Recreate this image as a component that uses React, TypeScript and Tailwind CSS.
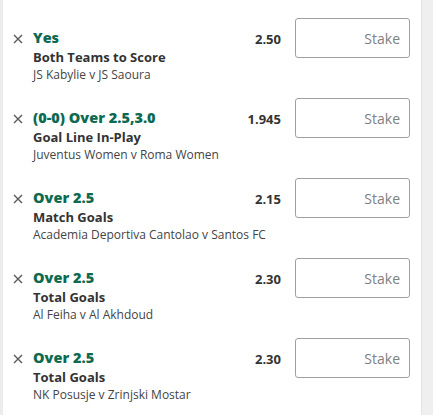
import React from "react";

type Bet = {
  selection: string;
  market: string;
  event: string;
  odds: string;
};

const bets: Bet[] = [
  { selection: "Yes", market: "Both Teams to Score", event: "JS Kabylie v JS Saoura", odds: "2.50" },
  { selection: "(0-0) Over 2.5,3.0", market: "Goal Line In-Play", event: "Juventus Women v Roma Women", odds: "1.945" },
  { selection: "Over 2.5", market: "Match Goals", event: "Academia Deportiva Cantolao v Santos FC", odds: "2.15" },
  { selection: "Over 2.5", market: "Total Goals", event: "Al Feiha v Al Akhdoud", odds: "2.30" },
  { selection: "Over 2.5", market: "Total Goals", event: "NK Posusje v Zrinjski Mostar", odds: "2.30" },
];

const CloseIcon = () => (
  <svg width="10" height="10" viewBox="0 0 10 10" className="block">
    <path d="M1 1 L9 9 M9 1 L1 9" stroke="#5a5a5a" strokeWidth="1.4" />
  </svg>
);

const BetRow: React.FC<{ bet: Bet }> = ({ bet }) => (
  <div className="flex items-start h-[80px] pt-[18px]">
    <div className="w-[30px] shrink-0 pl-[10px] pt-[16px]">
      <CloseIcon />
    </div>
    <div className="flex-1 min-w-0 pt-[10px]">
      <div className="text-[14.5px] leading-[20px] font-extrabold text-[#0d6a50] whitespace-nowrap">{bet.selection}</div>
      <div className="text-[13px] leading-[18px] font-bold text-[#333]">{bet.market}</div>
      <div className="text-[12px] leading-[17px] text-[#444] whitespace-nowrap">{bet.event}</div>
    </div>
    <div className="shrink-0 pt-[12px] pr-[14px] text-[13px] leading-[18px] font-bold text-[#333]">{bet.odds}</div>
    <input
      placeholder="Stake"
      className="shrink-0 w-[115px] h-[40px] border border-[#a0a0a0] rounded-[3px] pl-[10px] pr-[9px] text-right text-[14px] placeholder:text-[#808080] outline-none"
    />
  </div>
);

export default function App() {
  return (
    <div className="flex w-[433px] h-[415px] overflow-hidden bg-white" style={{ fontFamily: '"Open Sans", sans-serif' }}>
      <div className="w-[3px] shrink-0 bg-[#ececec]" />
      <div className="flex-1 min-w-0 pr-[11px]">
        {bets.map((b, i) => (
          <BetRow key={i} bet={b} />
        ))}
      </div>
      <div className="w-[12px] shrink-0 bg-[#efefef] border-l border-[#e4e4e4]" />
    </div>
  );
}
